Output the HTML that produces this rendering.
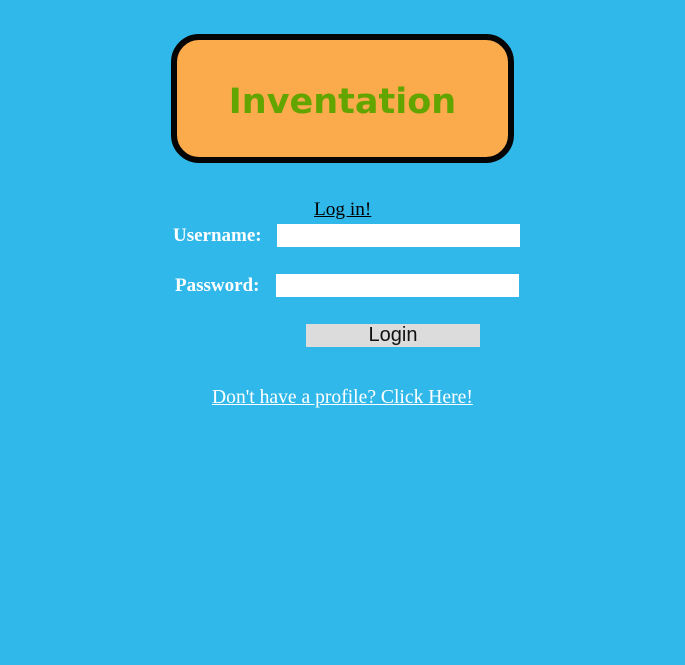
<!DOCTYPE html>
<html><head><style>
body{margin:0;width:685px;height:665px;background:#31b8ea;position:relative;overflow:hidden;font-family:"Liberation Serif",serif;}
.box{position:absolute;left:171px;top:34px;width:331px;height:117px;border:6px solid #050505;border-radius:28px;background:#fbaa4c;}
.title{position:absolute;left:0;right:0;top:42px;text-align:center;font-family:"DejaVu Sans","Liberation Sans",sans-serif;font-weight:bold;font-size:35px;color:#62a400;}
.t{position:absolute;font-size:20px;color:#fff;font-weight:bold;}
.n{font-weight:normal;}
.in{position:absolute;background:#fff;height:23px;width:243px;}
.btn{position:absolute;left:306px;top:324px;width:174px;height:23px;background:#dcdcdc;text-align:center;font-family:"Liberation Sans",sans-serif;font-size:20px;line-height:23px;color:#111;}
</style></head><body>
<div class="box"><div class="title">Inventation</div></div>
<div class="t n" style="left:314px;top:199px;color:#000;text-decoration:underline;font-size:19.3px;">Log in!</div>
<div class="t" style="left:173px;top:225px;font-size:19px;">Username:</div>
<div class="in" style="left:277px;top:224px;"></div>
<div class="t" style="left:175px;top:275px;font-size:19px;">Password:</div>
<div class="in" style="left:276px;top:274px;"></div>
<div class="btn">Login</div>
<div class="t n" style="left:212px;top:387px;text-decoration:underline;font-size:19.6px;">Don't have a profile? Click Here!</div>
</body></html>
